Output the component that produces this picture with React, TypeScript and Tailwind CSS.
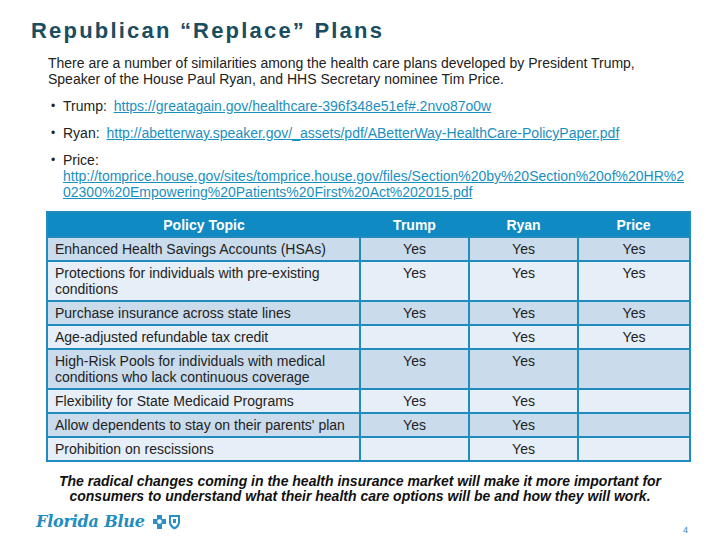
import React from "react";

const rows: { topic: string[]; t: string; r: string; p: string }[] = [
  { topic: ["Enhanced Health Savings Accounts (HSAs)"], t: "Yes", r: "Yes", p: "Yes" },
  { topic: ["Protections for individuals with pre-existing", "conditions"], t: "Yes", r: "Yes", p: "Yes" },
  { topic: ["Purchase insurance across state lines"], t: "Yes", r: "Yes", p: "Yes" },
  { topic: ["Age-adjusted refundable tax credit"], t: "", r: "Yes", p: "Yes" },
  { topic: ["High-Risk Pools for individuals with medical", "conditions who lack continuous coverage"], t: "Yes", r: "Yes", p: "" },
  { topic: ["Flexibility for State Medicaid Programs"], t: "Yes", r: "Yes", p: "" },
  { topic: ["Allow dependents to stay on their parents' plan"], t: "Yes", r: "Yes", p: "" },
  { topic: ["Prohibition on rescissions"], t: "", r: "Yes", p: "" },
];

export default function App() {
  return (
    <div
      className="w-[720px] h-[540px] bg-white relative overflow-hidden text-[#222]"
      style={{ fontFamily: '"Liberation Sans", Arial, sans-serif' }}
    >
      <div className="pl-[31px] pt-[17px]">
        <h1 className="text-[22px] leading-[28px] font-bold tracking-[2.2px] text-[#1a4d60]">
          Republican “Replace” Plans
        </h1>
      </div>
      <div className="pl-[48px] pr-[10px] mt-[10px] text-[14px] leading-[16px]">
        <p>
          There are a number of similarities among the health care plans developed by President Trump,
          <br />
          Speaker of the House Paul Ryan, and HHS Secretary nominee Tim Price.
        </p>
      </div>
      <div className="pl-[51px] mt-[11px] text-[14px] leading-[16px] flex flex-col gap-[11px]">
        <div className="flex">
          <span className="w-[12px] text-[12px]">•</span>
          <span>Trump:&nbsp; </span>
          <span className="text-[#1b8fc0] underline ml-[3px]">https://greatagain.gov/healthcare-396f348e51ef#.2nvo87o0w</span>
        </div>
        <div className="flex">
          <span className="w-[12px] text-[12px]">•</span>
          <span>Ryan:&nbsp; </span>
          <span className="text-[#1b8fc0] underline ml-[3px]">http://abetterway.speaker.gov/_assets/pdf/ABetterWay-HealthCare-PolicyPaper.pdf</span>
        </div>
        <div className="flex">
          <span className="w-[12px] text-[12px]">•</span>
          <div>
            <div>Price:</div>
            <div className="text-[#1b8fc0] underline whitespace-nowrap">
              http://tomprice.house.gov/sites/tomprice.house.gov/files/Section%20by%20Section%20of%20HR%2
              <br />
              02300%20Empowering%20Patients%20First%20Act%202015.pdf
            </div>
          </div>
        </div>
      </div>
      <div className="pl-[46px] mt-[11px]">
        <table className="border-collapse border-2 border-[#1f8cbd] text-[14px] leading-[16px] table-fixed w-[643px]">
          <colgroup>
            <col className="w-[313px]" />
            <col className="w-[109px]" />
            <col className="w-[109px]" />
            <col className="w-[112px]" />
          </colgroup>
          <thead>
            <tr className="bg-[#0f8ac3] text-white h-[25px]">
              <th className="text-center font-bold">Policy Topic</th>
              <th className="text-center font-bold">Trump</th>
              <th className="text-center font-bold">Ryan</th>
              <th className="text-center font-bold">Price</th>
            </tr>
          </thead>
          <tbody>
            {rows.map((row, i) => (
              <tr key={i} className={i % 2 === 0 ? "bg-[#cadbec]" : "bg-[#e6eef7]"}>
                <td className="border-2 border-[#1f8cbd] px-[7px] align-top py-[3px] whitespace-nowrap">
                  {row.topic.map((l, j) => (
                    <div key={j}>{l}</div>
                  ))}
                </td>
                <td className="border-2 border-[#1f8cbd] text-center align-top pt-[3px]">{row.t}</td>
                <td className="border-2 border-[#1f8cbd] text-center align-top pt-[3px]">{row.r}</td>
                <td className="border-2 border-[#1f8cbd] text-center align-top pt-[3px]">{row.p}</td>
              </tr>
            ))}
          </tbody>
        </table>
      </div>
      <div className="mt-[12px] text-center text-[14px] leading-[15px] font-bold italic text-[#111] whitespace-nowrap">
        The radical changes coming in the health insurance market will make it more important for
        <br />
        consumers to understand what their health care options will be and how they will work.
      </div>
      <div className="absolute left-[36px] top-[512px] flex items-center gap-[7px]">
        <span
          className="text-[16px] italic font-bold text-[#1f8dbf] leading-[20px] tracking-[-0.2px]"
          style={{ fontFamily: '"DejaVu Serif", serif' }}
        >
          Florida Blue
        </span>
        <svg width="30" height="16" viewBox="0 0 30 16">
          <path d="M5 1h5v4h4v5h-4v5H5v-5H1V5h4z" fill="#2a8fc4" />
          <circle cx="7.5" cy="7.5" r="2.2" fill="#fff" />
          <path d="M17 1h11v7c0 4-3 6.5-5.5 7.5C20 14.5 17 12 17 8z" fill="#2a8fc4" />
          <path d="M19 3h7v5c0 2.5-2 4-3.5 5C21 12 19 10.5 19 8z" fill="#fff" />
          <path d="M21 5h3v4h-3z" fill="#2a8fc4" />
        </svg>
      </div>
      <div className="absolute left-[683px] top-[524px] text-[9px] text-[#1f8dbf]">4</div>
    </div>
  );
}
